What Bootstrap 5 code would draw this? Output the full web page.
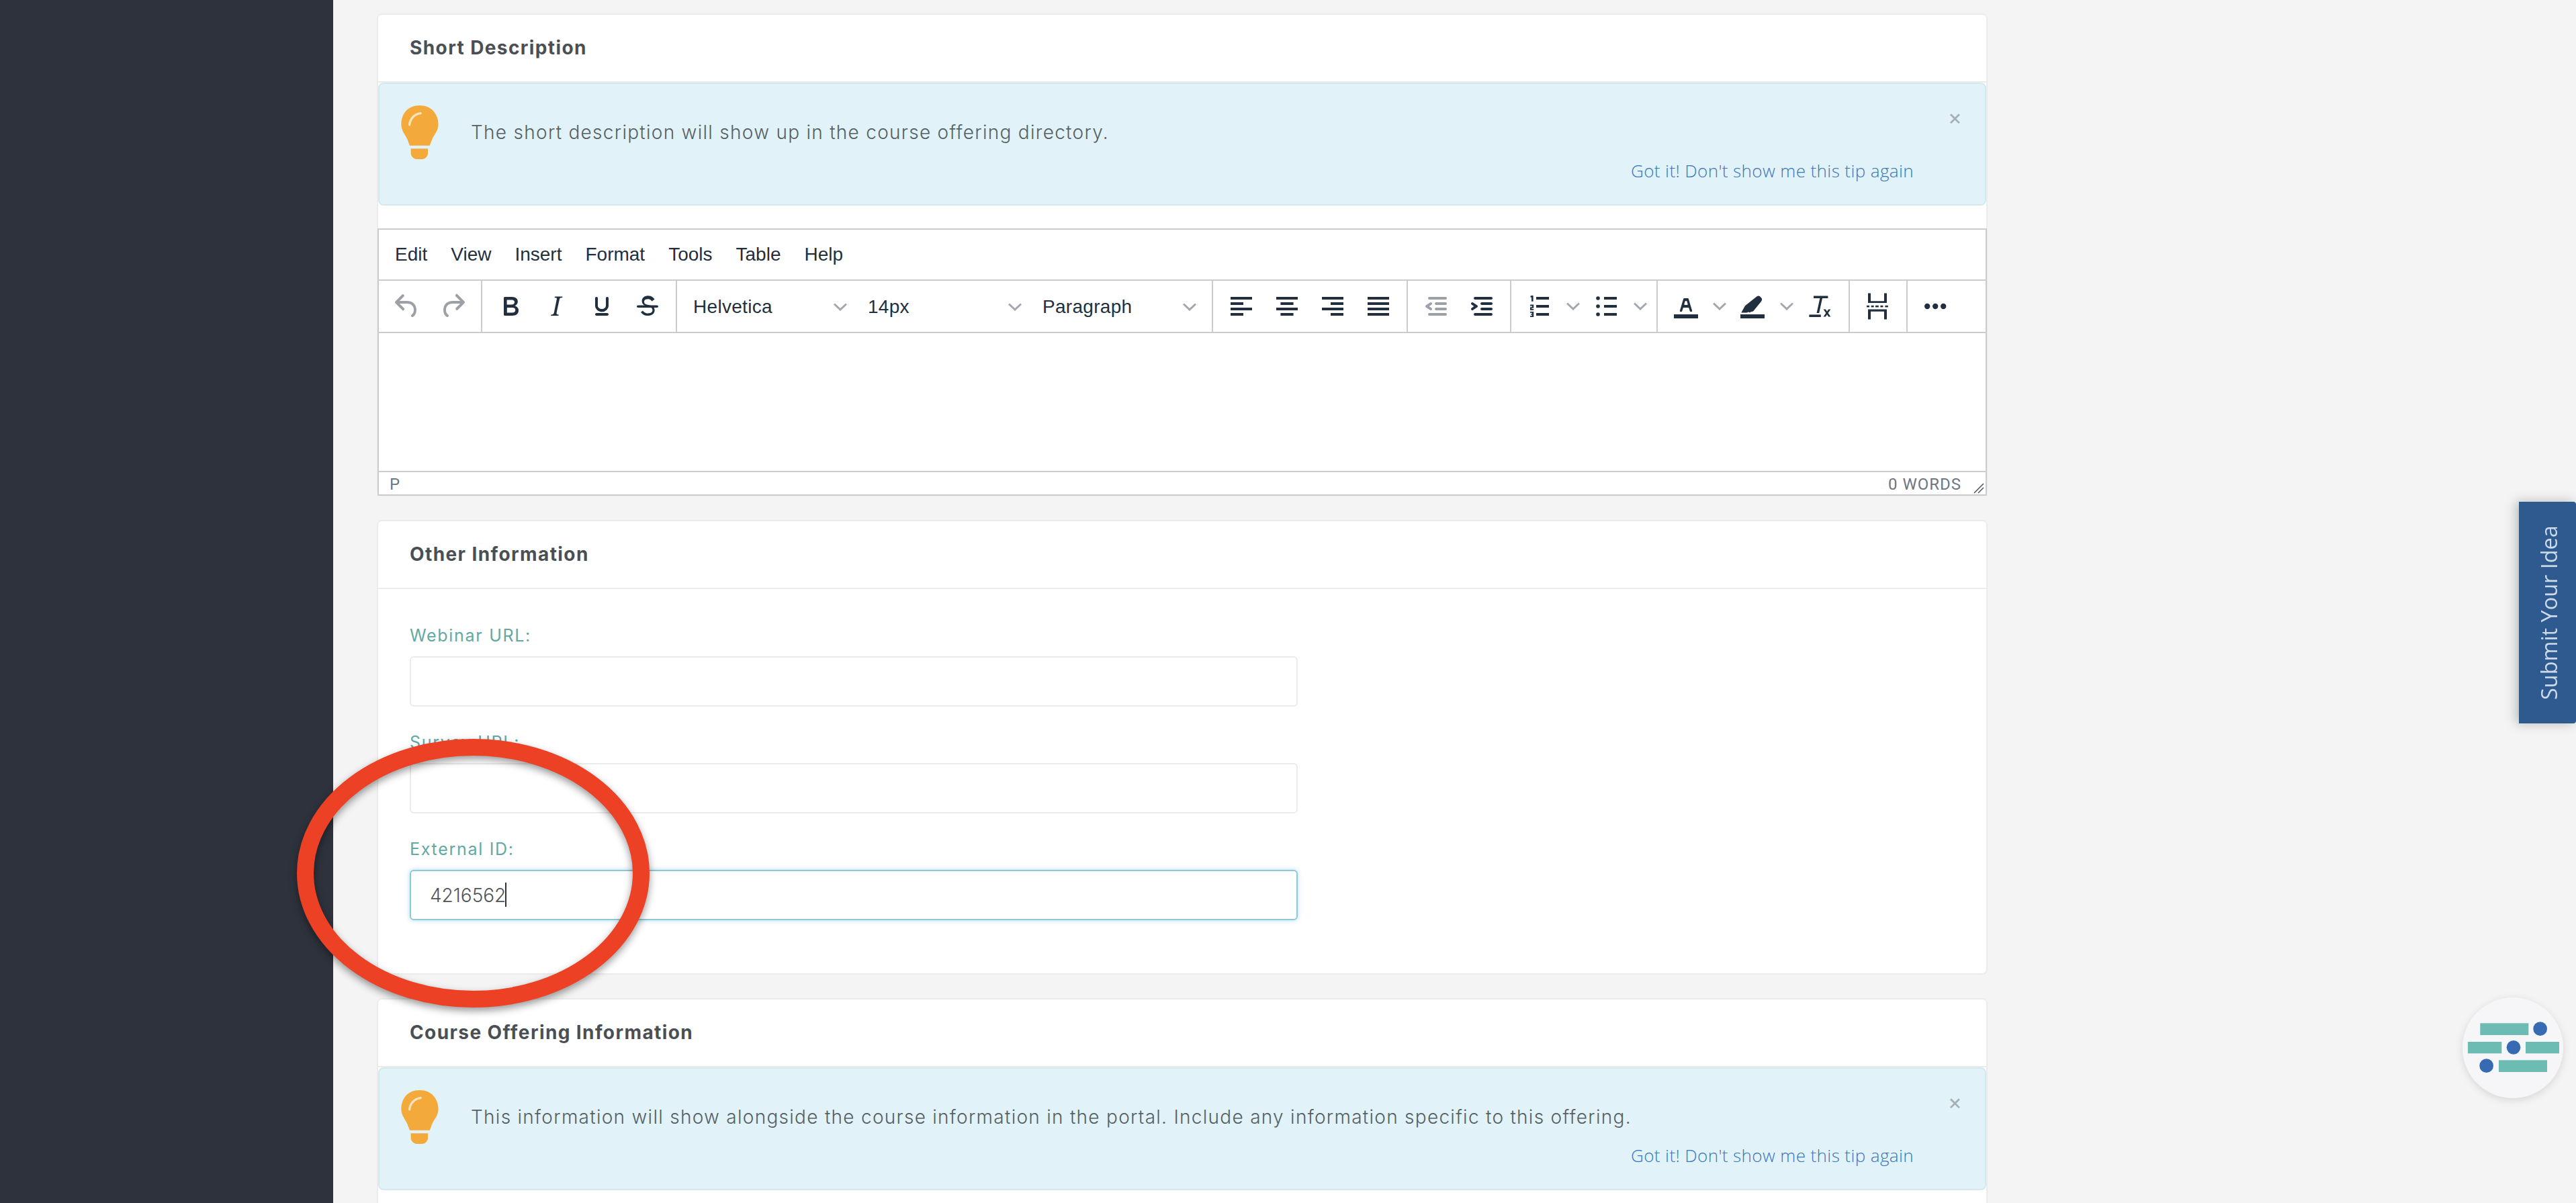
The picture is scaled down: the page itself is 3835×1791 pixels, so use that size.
<!doctype html>
<html lang="en">
<head>
<meta charset="utf-8">
<title>Course Offering</title>
<link rel="stylesheet" href="https://cdn.jsdelivr.net/npm/bootstrap@5.3.0/dist/css/bootstrap.min.css">
<style>
html,body{height:100%;overflow:hidden;background:#f4f4f4}
body{font-family:Inter,"Liberation Sans",sans-serif;color:#555b60}
.page-shell{height:1791px;overflow:hidden;position:relative}
.side-rail{width:496px;flex:none;background:#2e323c}
.work-area{padding:20px 0 0 65px;width:2463px;flex:none}
.panel{border:2px solid #ebebeb;border-radius:8px;margin-bottom:35px;background:#fff;--bs-card-bg:#fff}
.panel-head{height:101px;background:#fff;border:0;border-bottom:2px solid #ebebeb;padding:0 47px;font-size:28px;font-weight:700;color:#4a4f54;letter-spacing:1.4px;line-height:99px;border-radius:6px 6px 0 0}
.tip{margin:0;background:#e1f3f8;border:2px solid #d5e8ec;border-radius:8px;height:183px;padding:32px;position:relative;font-weight:300}
.bulb{width:56px;height:80px;margin-right:48px;flex:none}
.tip-text{margin:19px 0 18px;font-size:28px;line-height:42px;color:#566064;letter-spacing:1.28px;white-space:nowrap}
.tip-link{font-size:26px;line-height:36px;color:#3a74bc;margin-right:74px;text-decoration:none;letter-spacing:.4px;font-family:"Open Sans",sans-serif;font-weight:300}
.tip-close{position:absolute;top:32px;right:34px;font-size:32px;line-height:36px;color:#a5aeb2;font-weight:400}
.panel-gap{height:34px}
.editor-box{border:2px solid #ccc;margin:0 -1px -1px;height:398px;font-family:"Liberation Sans",sans-serif;color:#222f3e;background:#fff}
.menu-row{height:76px;border-bottom:2px solid #ccc;padding-left:24px;gap:35px;font-size:28px}
.tool-row{height:78px;border-bottom:2px solid #ccc}
.tool-group{padding:0 8px;border-right:2px solid #ccc;height:100%}
.tool-group.end{border-right:0}
.tool-btn{width:68px;height:100%;padding:0;border:0;background:none}
.tool-btn svg{width:48px;height:48px;fill:#222f3e;display:block;margin:0 auto}
.tool-btn.off svg{fill:#9ca1a8}
.chev-btn{width:32px;height:100%;padding:0;border:0;background:none}
.chev{width:20px;height:12px;fill:none;stroke:#a3a7ad;stroke-width:3;display:block;margin:auto}
.pick-btn{width:260px;height:100%;padding:2px 15px 0 16px;border:0;background:none;font-size:28px;letter-spacing:.3px;color:#222f3e;font-family:"Liberation Sans",sans-serif}
.edit-body{height:205px;background:#fff}
.foot-row{height:34px;border-top:2px solid #ccc;padding:0 0 0 16px;font-size:24px;font-family:Roboto,sans-serif;color:#6e7681;position:relative;line-height:37px}
.word-count{margin-right:36px;letter-spacing:1px}
.grip{position:absolute;right:2px;bottom:0;width:16px;height:16px;stroke:#555b62;stroke-width:1.6;fill:none}
.form-pad{padding:51px 47px 44px}
.field{width:1322px;margin-bottom:35px}
.field-label{display:block;font-size:25px;line-height:36px;margin:0 0 13px;color:#62a9a4;font-weight:400;letter-spacing:1.7px}
.field-input{height:75px;border:2px solid #e9ebed;border-radius:6px;box-shadow:none;padding:0 28px;font-size:28px;font-weight:300;color:#4e5459;letter-spacing:0}
.field-input.active{border-color:#8bcbd3;box-shadow:0 0 7px rgba(100,180,230,.5)}
.field-wrap{position:relative}
.caret-mark{position:absolute;left:142px;top:19px;width:2px;height:36px;background:#333}
.mark-ring{position:absolute;left:0;top:0;width:3835px;height:1791px;pointer-events:none;filter:drop-shadow(0 5px 6px rgba(0,0,0,.4))}
.idea-tab{position:absolute;left:3750px;top:747px;width:85px;height:330px;background:#2e5a8f;color:#ccd9e8;border:0;border-radius:4px 0 0 4px;padding:0 3px 0 0;font-family:"Open Sans",sans-serif;font-size:32.4px;writing-mode:vertical-rl;transform:rotate(180deg);box-shadow:none;line-height:1}
.idea-shadow{position:absolute;left:3750px;top:747px;width:85px;height:330px;box-shadow:-4px 0 16px rgba(0,0,0,.25)}
.help-orb{position:absolute;left:3620px;top:1460px;width:215px;height:200px;filter:drop-shadow(0 3px 6px rgba(0,0,0,.12))}
</style>
</head>
<body>
<svg width="0" height="0" class="position-absolute">
<defs>
<symbol id="i-undo" viewBox="0 0 24 24"><path d="M6.4 8H12c3.7 0 6.2 2 6.8 5.1.6 2.7-.4 5.6-2.3 6.8a1 1 0 0 1-1-1.8c1.1-.6 1.8-2.7 1.4-4.6-.5-2.1-2.1-3.5-4.9-3.5H6.4l3.3 3.3a1 1 0 1 1-1.4 1.4l-5-5a1 1 0 0 1 0-1.4l5-5a1 1 0 0 1 1.4 1.4L6.4 8z"/></symbol>
<symbol id="i-redo" viewBox="0 0 24 24"><path d="M17.6 10H12c-2.8 0-4.4 1.4-4.9 3.5-.4 2 .3 4 1.4 4.6a1 1 0 1 1-1 1.8c-2-1.2-2.9-4.1-2.3-6.8.6-3 3-5.1 6.8-5.1h5.6l-3.3-3.3a1 1 0 1 1 1.4-1.4l5 5a1 1 0 0 1 0 1.4l-5 5a1 1 0 0 1-1.4-1.4l3.3-3.3z"/></symbol>
<symbol id="i-bold" viewBox="0 0 24 24"><path d="M7.8 19c-.3 0-.5 0-.6-.2l-.2-.5V5.7c0-.2 0-.4.2-.5l.6-.2h5c1.5 0 2.7.3 3.5 1 .7.6 1.1 1.4 1.1 2.5a3 3 0 0 1-.6 1.9c-.4.6-1 1-1.6 1.2.4.1.9.3 1.3.6s.8.7 1 1.2c.4.4.5 1 .5 1.6 0 1.3-.4 2.3-1.3 3-.8.7-2.1 1-3.8 1H7.8zm5-8.3c.6 0 1.2-.1 1.6-.5.4-.3.6-.7.6-1.3 0-1.1-.8-1.7-2.3-1.7H9.3v3.5h3.4zm.5 6c.7 0 1.3-.1 1.7-.4.4-.4.6-.9.6-1.5s-.2-1-.7-1.4c-.4-.3-1-.4-2-.4H9.4v3.8h4z"/></symbol>
<symbol id="i-italic" viewBox="0 0 24 24"><path d="M16.7 4.7l-.1.9h-.3c-.6 0-1 0-1.4.3-.3.3-.4.6-.5 1.1l-2.1 9.8v.6c0 .5.4.8 1.4.8h.2l-.2.8H8l.2-.8h.2c1.1 0 1.8-.5 2-1.5l2-9.8.1-.5c0-.6-.4-.8-1.4-.8h-.3l.2-.9h5.8z"/></symbol>
<symbol id="i-under" viewBox="0 0 24 24"><path d="M16 5c.6 0 1 .4 1 1v5.5a4 4 0 0 1-.4 1.8l-1 1.4a5.3 5.3 0 0 1-5.5 1 5 5 0 0 1-1.6-1c-.5-.4-.8-.9-1.1-1.4a4 4 0 0 1-.4-1.8V6c0-.6.4-1 1-1s1 .4 1 1v5.5c0 .3 0 .6.2 1l.6.7a3.3 3.3 0 0 0 2.2.8 3.4 3.4 0 0 0 2.2-.8c.3-.2.4-.5.6-.8l.2-.9V6c0-.6.4-1 1-1zM8 17h8c.6 0 1 .4 1 1s-.4 1-1 1H8a1 1 0 0 1 0-2z"/></symbol>
<symbol id="i-strike" viewBox="0 0 24 24"><path d="M15.6 8.5c-.5-.7-1-1.1-1.3-1.3-.6-.4-1.3-.6-2-.6-2.7 0-2.8 1.7-2.8 2.1 0 1.6 1.8 2 3.2 2.3 4.4.9 4.6 2.8 4.6 3.9 0 1.4-.7 4.1-5 4.1A6.2 6.2 0 0 1 7 16.4l1.5-1.1c.4.6 1.6 2 3.7 2 1.6 0 2.5-.4 3-1 .3-.4.5-1 .5-1.3 0-1.1-.4-2.3-3.5-2.9-1.4-.3-4.4-.9-4.4-4 0-.6.2-2.7 2.5-3.6.6-.3 1.3-.4 2-.4 1.5 0 2.6.4 3.5 1.1.6.5 1.1 1 1.5 1.6l-1.7 1.2z"/><rect x="4" y="11.2" width="16" height="1.8" rx=".9"/></symbol>
<symbol id="i-al" viewBox="0 0 24 24"><rect x="4" y="5" width="16" height="2"/><rect x="4" y="9" width="9.5" height="2"/><rect x="4" y="13" width="16" height="2"/><rect x="4" y="17" width="9.5" height="2"/></symbol>
<symbol id="i-ac" viewBox="0 0 24 24"><rect x="4" y="5" width="16" height="2"/><rect x="7.2" y="9" width="9.6" height="2"/><rect x="4" y="13" width="16" height="2"/><rect x="7.2" y="17" width="9.6" height="2"/></symbol>
<symbol id="i-ar" viewBox="0 0 24 24"><rect x="4" y="5" width="16" height="2"/><rect x="10.5" y="9" width="9.5" height="2"/><rect x="4" y="13" width="16" height="2"/><rect x="10.5" y="17" width="9.5" height="2"/></symbol>
<symbol id="i-aj" viewBox="0 0 24 24"><rect x="4" y="5" width="16" height="2"/><rect x="4" y="9" width="16" height="2"/><rect x="4" y="13" width="16" height="2"/><rect x="4" y="17" width="16" height="2"/></symbol>
<symbol id="i-out" viewBox="0 0 24 24"><path d="M7 5h12c.6 0 1 .4 1 1s-.4 1-1 1H7a1 1 0 1 1 0-2zm5 4h7c.6 0 1 .4 1 1s-.4 1-1 1h-7a1 1 0 0 1 0-2zm0 4h7c.6 0 1 .4 1 1s-.4 1-1 1h-7a1 1 0 0 1 0-2zm-5 4h12a1 1 0 0 1 0 2H7a1 1 0 0 1 0-2zm1.6-3.8a1 1 0 0 1-1.2 1.6l-3-2a1 1 0 0 1 0-1.6l3-2a1 1 0 0 1 1.2 1.6L6.8 12l1.8 1.2z"/></symbol>
<symbol id="i-ind" viewBox="0 0 24 24"><path d="M7 5h12c.6 0 1 .4 1 1s-.4 1-1 1H7a1 1 0 1 1 0-2zm5 4h7c.6 0 1 .4 1 1s-.4 1-1 1h-7a1 1 0 0 1 0-2zm0 4h7c.6 0 1 .4 1 1s-.4 1-1 1h-7a1 1 0 0 1 0-2zm-5 4h12a1 1 0 0 1 0 2H7a1 1 0 0 1 0-2zm-2.6-3.8L6.2 12l-1.8-1.2a1 1 0 0 1 1.2-1.6l3 2a1 1 0 0 1 0 1.6l-3 2a1 1 0 1 1-1.2-1.6z"/></symbol>
<symbol id="i-num" viewBox="0 0 24 24"><rect x="9.5" y="5" width="9.5" height="2"/><rect x="9.5" y="11" width="9.5" height="2"/><rect x="9.5" y="17" width="9.5" height="2"/><path d="M6 4h1.3v4.4H6V5.2l-.8.2V4.4zM5 10.8h2.6v2.6H6.2v.6h1.4v.9H5v-2.3h1.4v-.9H5zM5 16h2.6v4H5v-.9h1.4v-.7H5.6v-.8h.8v-.7H5z"/></symbol>
<symbol id="i-bul" viewBox="0 0 24 24"><rect x="10" y="5" width="9.5" height="2"/><rect x="10" y="11" width="9.5" height="2"/><rect x="10" y="17" width="9.5" height="2"/><circle cx="5.5" cy="6" r="1.4"/><circle cx="5.5" cy="12" r="1.4"/><circle cx="5.5" cy="18" r="1.4"/></symbol>
<symbol id="i-fore" viewBox="0 0 24 24"><path d="M3 18h18v3H3z"/><path d="M8.7 16h-.8a.5.5 0 0 1-.5-.6l2.7-9c.1-.3.3-.4.5-.4h2.8c.2 0 .4.1.5.4l2.7 9a.5.5 0 0 1-.5.6h-.8a.5.5 0 0 1-.4-.4l-.7-2.2c0-.3-.3-.4-.5-.4h-3.4c-.2 0-.4.1-.5.4l-.7 2.2c0 .3-.2.4-.4.4zm2.6-7.6l-.6 2a.5.5 0 0 0 .5.6h1.6a.5.5 0 0 0 .5-.6l-.6-2c0-.3-.3-.4-.5-.4h-.4c-.2 0-.4.1-.5.4z"/></symbol>
<symbol id="i-back" viewBox="0 0 24 24"><path d="M2.5 18h18v3h-18z"/><path d="M3.2 16.6 6 11.6l8.6-6.8c.9-.7 2-.7 2.7.1l.8.9c.7.8.6 1.9-.2 2.7L12 15.8l-1.6.3-.9.5-1.2-.4-.9.6H3.2z"/></symbol>
<symbol id="i-clear" viewBox="0 0 24 24"><path d="M7 4.3h10.7V6h-4.2l-2.4 11H9.3l2.4-11H7z"/><rect x="3.7" y="18.2" width="8.7" height="1.8"/><path d="M14.3 14.3h1.6l1.1 1.6 1.1-1.6h1.6l-1.9 2.7 1.9 2.8h-1.6L17 18.1l-1.1 1.7h-1.6l1.9-2.8z"/></symbol>
<symbol id="i-break" viewBox="0 0 24 24"><path d="M4.5 2.2h2v5.9h10V2.2h2v7.3h-14z"/><path d="M4.5 21.8h2V15.9h10v5.9h2v-7.5h-14z"/><rect x="3.5" y="11.4" width="2" height="1.3"/><rect x="6.8" y="11.4" width="2" height="1.3"/><rect x="10" y="11.4" width="2.4" height="1.3"/><rect x="13.7" y="11.4" width="2" height="1.3"/><rect x="17.2" y="11.4" width="2.2" height="1.3"/></symbol>
<symbol id="i-more" viewBox="0 0 24 24"><circle cx="5.6" cy="12" r="2.1"/><circle cx="11.6" cy="12" r="2.1"/><circle cx="17.6" cy="12" r="2.1"/></symbol>
<symbol id="i-chev" viewBox="0 0 20 12"><polyline points="1,1.5 10,10 19,1.5"/></symbol>
<symbol id="i-bulb" viewBox="168 110 167 242"><path fill="#f4a93b" d="M251 110C195 110 168 150 168 195c0 30 17 45 27 67l11 29h90l11-29c10-22 28-37 28-67 0-45-30-85-84-85z"/><path fill="#f4a93b" d="M211 304h77v21c0 15-13 27-26 27h-24c-13 0-27-12-27-27z"/><path fill="none" stroke="#fbe4bd" stroke-width="10" stroke-linecap="round" d="M205 197c2-24 20-49 50-52"/></symbol>
</defs>
</svg>

<div class="page-shell d-flex">
  <div class="side-rail"></div>
  <div class="work-area">

    <div class="card panel">
      <div class="card-header panel-head">Short Description</div>
      <div class="alert tip d-flex align-items-start">
        <svg class="bulb"><use href="#i-bulb"/></svg>
        <div class="flex-grow-1">
          <p class="tip-text">The short description will show up in the course offering directory.</p>
          <div class="text-end"><a class="tip-link" href="#">Got it! Don't show me this tip again</a></div>
        </div>
        <span class="tip-close">×</span>
      </div>
      <div class="panel-gap"></div>
      <div class="editor-box d-flex flex-column">
        <div class="menu-row d-flex align-items-center"><span>Edit</span><span>View</span><span>Insert</span><span>Format</span><span>Tools</span><span>Table</span><span>Help</span></div>
        <div class="tool-row d-flex">
          <div class="tool-group d-flex">
            <button class="tool-btn off"><svg><use href="#i-undo"/></svg></button>
            <button class="tool-btn off"><svg><use href="#i-redo"/></svg></button>
          </div>
          <div class="tool-group d-flex">
            <button class="tool-btn"><svg><use href="#i-bold"/></svg></button>
            <button class="tool-btn"><svg><use href="#i-italic"/></svg></button>
            <button class="tool-btn"><svg><use href="#i-under"/></svg></button>
            <button class="tool-btn"><svg><use href="#i-strike"/></svg></button>
          </div>
          <div class="tool-group d-flex">
            <button class="pick-btn d-flex align-items-center justify-content-between"><span>Helvetica</span><svg class="chev m-0"><use href="#i-chev"/></svg></button>
            <button class="pick-btn d-flex align-items-center justify-content-between"><span>14px</span><svg class="chev m-0"><use href="#i-chev"/></svg></button>
            <button class="pick-btn d-flex align-items-center justify-content-between"><span>Paragraph</span><svg class="chev m-0"><use href="#i-chev"/></svg></button>
          </div>
          <div class="tool-group d-flex">
            <button class="tool-btn"><svg><use href="#i-al"/></svg></button>
            <button class="tool-btn"><svg><use href="#i-ac"/></svg></button>
            <button class="tool-btn"><svg><use href="#i-ar"/></svg></button>
            <button class="tool-btn"><svg><use href="#i-aj"/></svg></button>
          </div>
          <div class="tool-group d-flex">
            <button class="tool-btn off"><svg><use href="#i-out"/></svg></button>
            <button class="tool-btn"><svg><use href="#i-ind"/></svg></button>
          </div>
          <div class="tool-group d-flex">
            <button class="tool-btn"><svg><use href="#i-num"/></svg></button>
            <button class="chev-btn"><svg class="chev"><use href="#i-chev"/></svg></button>
            <button class="tool-btn"><svg><use href="#i-bul"/></svg></button>
            <button class="chev-btn"><svg class="chev"><use href="#i-chev"/></svg></button>
          </div>
          <div class="tool-group d-flex">
            <button class="tool-btn"><svg><use href="#i-fore"/></svg></button>
            <button class="chev-btn"><svg class="chev"><use href="#i-chev"/></svg></button>
            <button class="tool-btn"><svg><use href="#i-back"/></svg></button>
            <button class="chev-btn"><svg class="chev"><use href="#i-chev"/></svg></button>
            <button class="tool-btn"><svg><use href="#i-clear"/></svg></button>
          </div>
          <div class="tool-group d-flex">
            <button class="tool-btn"><svg><use href="#i-break"/></svg></button>
          </div>
          <div class="tool-group end d-flex">
            <button class="tool-btn"><svg><use href="#i-more"/></svg></button>
          </div>
        </div>
        <div class="edit-body"></div>
        <div class="foot-row d-flex justify-content-between">
          <span>P</span><span class="word-count">0 WORDS</span>
          <svg class="grip" viewBox="0 0 16 16"><path d="M1 15 15 1M7 15l8-8"/></svg>
        </div>
      </div>
    </div>

    <div class="card panel">
      <div class="card-header panel-head">Other Information</div>
      <div class="card-body form-pad">
        <div class="field">
          <label class="form-label field-label">Webinar URL:</label>
          <input class="form-control field-input" type="text">
        </div>
        <div class="field">
          <label class="form-label field-label">Survey URL:</label>
          <input class="form-control field-input" type="text">
        </div>
        <div class="field">
          <label class="form-label field-label">External ID:</label>
          <div class="field-wrap">
            <input class="form-control field-input active" type="text" value="4216562">
            <span class="caret-mark"></span>
          </div>
        </div>
      </div>
    </div>

    <div class="card panel">
      <div class="card-header panel-head">Course Offering Information</div>
      <div class="alert tip d-flex align-items-start">
        <svg class="bulb"><use href="#i-bulb"/></svg>
        <div class="flex-grow-1">
          <p class="tip-text">This information will show alongside the course information in the portal. Include any information specific to this offering.</p>
          <div class="text-end"><a class="tip-link" href="#">Got it! Don't show me this tip again</a></div>
        </div>
        <span class="tip-close">×</span>
      </div>
      <div class="panel-gap"></div>
    </div>

  </div>

  <svg class="mark-ring" viewBox="0 0 3835 1791"><ellipse cx="704.5" cy="1300" rx="250" ry="187.5" fill="none" stroke="#ec4125" stroke-width="25"/></svg>
  <div class="idea-shadow"></div>
  <button class="idea-tab">Submit Your Idea</button>
  <svg class="help-orb" viewBox="0 0 645 600">
    <circle cx="363" cy="300" r="225" fill="#f6f6f9"/>
    <g fill="#6cbcb3"><rect x="217" y="190" width="216" height="53"/><rect x="162" y="273" width="151" height="52"/><rect x="420" y="273" width="150" height="52"/><rect x="300" y="355" width="216" height="53"/></g>
    <g fill="#366bb3"><circle cx="485" cy="215" r="31"/><circle cx="366" cy="298" r="31"/><circle cx="245" cy="380" r="31"/></g>
  </svg>
</div>
</body>
</html>
